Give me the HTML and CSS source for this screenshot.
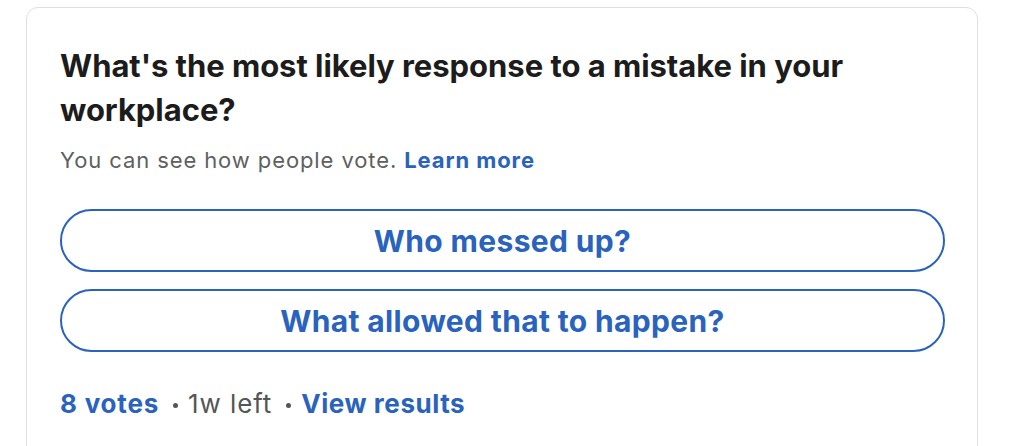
FILE: index.html
```html
<!DOCTYPE html>
<html>
<head>
<meta charset="utf-8">
<link rel="stylesheet" href="styles.css">
</head>
<body>
<div class="card">
  <h1 class="question">What's the most likely response to a mistake in your workplace?</h1>
  <p class="note">You can see how people vote. <a class="link" href="#">Learn more</a></p>
  <div class="options">
    <button class="option">Who messed up?</button>
    <button class="option">What allowed that to happen?</button>
  </div>
  <div class="meta">
    <a class="link votes" href="#">8 votes</a>
    <span class="dot"></span>
    <span class="left">1w left</span>
    <span class="dot"></span>
    <a class="link results" href="#">View results</a>
  </div>
</div>
</body>
</html>
```

FILE: styles.css
```css
html, body {
  margin: 0;
  padding: 0;
  background: #ffffff;
}
body {
  font-family: Inter, "Noto Sans", "Liberation Sans", sans-serif;
  padding: 7px 32px 0 26px;
  height: 446px;
  box-sizing: border-box;
  overflow: hidden;
}
.card {
  border: 1px solid #dfdfdf;
  border-radius: 12px;
  padding: 36px 32px 40px 33px;
  height: 480px;
  box-sizing: border-box;
}
.question {
  margin: 0;
  font-size: 31px;
  line-height: 44px;
  font-weight: 700;
  color: #1c1c1c;
  letter-spacing: -0.04px;
}
.note {
  margin: 14px 0 0;
  font-size: 22px;
  line-height: 28px;
  color: #5f5f5f;
  letter-spacing: 0.9px;
}
.link {
  color: #2a63bd;
  font-weight: 700;
  text-decoration: none;
}
.options {
  display: flex;
  flex-direction: column;
  gap: 17px;
  margin-top: 35px;
}
.option {
  height: 63px;
  border: 2px solid #2a63bd;
  border-radius: 32px;
  background: #fff;
  color: #2a63bd;
  font-family: inherit;
  font-size: 30px;
  font-weight: 700;
  letter-spacing: 0.35px;
  padding: 0;
}
.meta {
  margin-top: 36px;
  font-size: 26px;
  line-height: 32px;
  color: #555;
  display: flex;
  align-items: center;
}
.votes {
  letter-spacing: 0.8px;
}
.left {
  letter-spacing: 0.9px;
}
.results {
  letter-spacing: 0.55px;
}
.dot {
  width: 5px;
  height: 5px;
  border-radius: 50%;
  background: #555;
  margin: 2px 10px 0 14px;
}
```
